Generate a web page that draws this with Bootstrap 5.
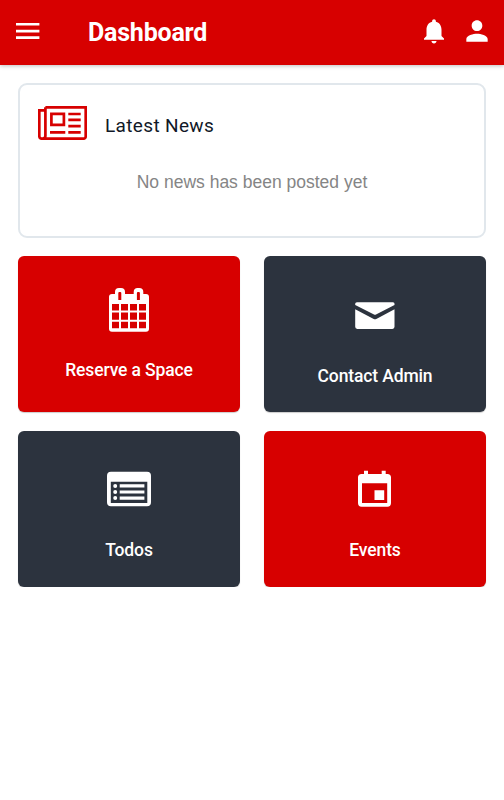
<!DOCTYPE html>
<html lang="en">
<head>
<meta charset="utf-8">
<meta name="viewport" content="width=device-width, initial-scale=1">
<title>Dashboard</title>
<link href="https://cdn.jsdelivr.net/npm/bootstrap@5.3.0/dist/css/bootstrap.min.css" rel="stylesheet">
<style>
body { font-family: Roboto, sans-serif; background: #fff; }
svg { display: block; flex: none; }
.topbar { height: 65px; background: #d70000; box-shadow: 0 1px 4px rgba(0,0,0,.25); padding: 0 11.5px 3px 16px; }
.topbar h1 { font-size: 25px; font-weight: 700; line-height: 32px; margin-left: 48px; padding-top: 3px; letter-spacing: -.2px; }
.icon-actions { gap: 11.5px; }
.page-body { padding: 18px 18px 0; }
.news { height: 155px; border: 2px solid #e1e7ec; border-radius: 9px; padding: 21px 18px 0; margin-bottom: 17.5px; }
.news h2 { font-size: 19px; font-weight: 400; line-height: 24px; color: #111827; margin: 6px 0 0 18px; letter-spacing: .35px; }
.news p { font: 17.5px/24px "Liberation Sans", Arial, sans-serif; color: #858585; margin-top: 30px; }
.tiles { display: grid; grid-template-columns: 1fr 1fr; column-gap: 24px; row-gap: 18.5px; }
.tile { height: 156.5px; border-radius: 6px; padding-top: 38px; gap: 25px; font-size: 17.5px; font-weight: 500; line-height: 24px; letter-spacing: -.13px; box-shadow: 0 1px 1px rgba(0,0,0,.2); }
.tile-tall { gap: 26px; }
.tile-first { padding-top: 32px; }
.tile-red { background: #d70000; }
.tile-dark { background: #2c333e; }
</style>
<script src="https://cdn.jsdelivr.net/npm/bootstrap@5.3.0/dist/js/bootstrap.bundle.min.js"></script>
</head>
<body>
<header class="topbar d-flex align-items-center text-white">
  <svg width="24" height="16" viewBox="0 0 24 16" fill="#fff"><path d="M0 0h23.400v2.600H0zM0 6.800h23.400v2.600H0zM0 13.300h23.400v2.600H0z"/></svg>
  <h1 class="mb-0">Dashboard</h1>
  <div class="icon-actions d-flex align-items-center ms-auto">
    <svg width="30" height="30" viewBox="0 0 24 24" fill="#fff"><path d="M12 22c1.100 0 2-.9 2-2h-4c0 1.100.9 2 2 2zm6-6v-5c0-3.070-1.630-5.640-4.500-6.320V4c0-.83-.67-1.500-1.500-1.500s-1.500.67-1.500 1.500v.68C7.640 5.360 6 7.920 6 11v5l-2 2v1h16v-1l-2-2z"/></svg>
    <svg width="32" height="32" viewBox="0 0 24 24" fill="#fff"><path d="M12 12c2.210 0 4-1.790 4-4s-1.790-4-4-4-4 1.790-4 4 1.790 4 4 4zm0 2c-2.670 0-8 1.340-8 4v2h16v-2c0-2.660-5.330-4-8-4z"/></svg>
  </div>
</header>
<main class="page-body">
  <section class="news">
    <div class="d-flex align-items-center">
      <svg width="49" height="34" viewBox="0 0 49 34" fill="none" stroke="#d70000" stroke-width="2.7"><path d="M7.400 1.300h40.300v29.200q0 2.200-2.200 2.200H3.700q-2.400 0-2.400-2.400V4.400h6.100M7.400 1.300v28.500q0 2.900-3 2.900M13.400 7.800h12.500v11H13.400zM12 26.400h15.300M30.300 8h12.400M30.300 13.800h12.400M30.300 20.100h12.400M30.300 26.400h12.400"/></svg>
      <h2>Latest News</h2>
    </div>
    <p class="text-center mb-0">No news has been posted yet</p>
  </section>
  <nav class="tiles">
    <a class="tile tile-red tile-first tile-tall d-flex flex-column align-items-center text-white text-decoration-none" href="#">
      <svg width="44" height="44" viewBox="0 0 44 44" fill="#fff" fill-rule="evenodd"><path d="M5 6h3V4q0-4 4-4h2q4 0 4 4v2h8.700V4q0-4 4-4h1.600q4 0 4 4v2H39q3 0 3 3v31.700q0 3-3 3H5q-3 0-3-3V9q0-3 3-3zM11.300 5v7h3V5q0-1-1-1h-1q-1 0-1 1zM29.900 5v7h3V5q0-1-1-1h-1q-1 0-1 1zM5 16v6.400h7V16zM14 16v6.400h7V16zM23 16v6.400h7V16zM32 16v6.400h7V16zM5 24.600v7.100h7v-7.100zM14 24.600v7.100h7v-7.100zM23 24.600v7.100h7v-7.100zM32 24.600v7.100h7v-7.100zM5 33.800v6.500h7v-6.500zM14 33.800v6.500h7v-6.500zM23 33.800v6.500h7v-6.500zM32 33.800v6.500h7v-6.500z"/></svg>
      <span>Reserve a Space</span>
    </a>
    <a class="tile tile-dark tile-tall d-flex flex-column align-items-center text-white text-decoration-none" href="#">
      <svg width="44" height="44" viewBox="0 0 44 44" fill="#fff"><path d="M2.200 11V9.700Q2.200 8.200 4 8.200h36q1.500 0 1.500 1.500V11L23 20.500q-1 .5-2 0zM2.200 15.300 20.700 25q1.300.7 2.600 0l18.200-9.700v17.500q0 2.100-2.100 2.100H4.300q-2.100 0-2.100-2.100z"/></svg>
      <span>Contact Admin</span>
    </a>
    <a class="tile tile-dark d-flex flex-column align-items-center text-white text-decoration-none" href="#">
      <svg width="44" height="44" viewBox="0 0 44 44" fill="#fff" fill-rule="evenodd"><path d="M4 2.700h36q4 0 4 4v26.600q0 4-4 4H4q-4 0-4-4V6.700q0-4 4-4zM3.800 12.800V34h36.500V12.800z"/><path d="M12.700 15.300h24.700v3.200H12.700zM12.700 21.400h24.700v3.200H12.700zM12.700 27.500h24.700v3.200H12.700z"/><circle cx="8.200" cy="16.900" r="2"/><circle cx="8.200" cy="23" r="2"/><circle cx="8.200" cy="29.100" r="2"/></svg>
      <span>Todos</span>
    </a>
    <a class="tile tile-red d-flex flex-column align-items-center text-white text-decoration-none" href="#">
      <svg width="44" height="44" viewBox="0 0 44 44" fill="#fff" fill-rule="evenodd"><path d="M11 1.800h4V5h13.700V1.800h4V5h1.700q3.600 0 3.600 3.600v25.500q0 3.600-3.600 3.600H8.600Q5 37.700 5 34.100V8.600Q5 5 8.600 5H11zM9 14.300V34h25.200V14.300zM21.500 21.300h9.700v9.700h-9.700z"/></svg>
      <span>Events</span>
    </a>
  </nav>
</main>
</body>
</html>
